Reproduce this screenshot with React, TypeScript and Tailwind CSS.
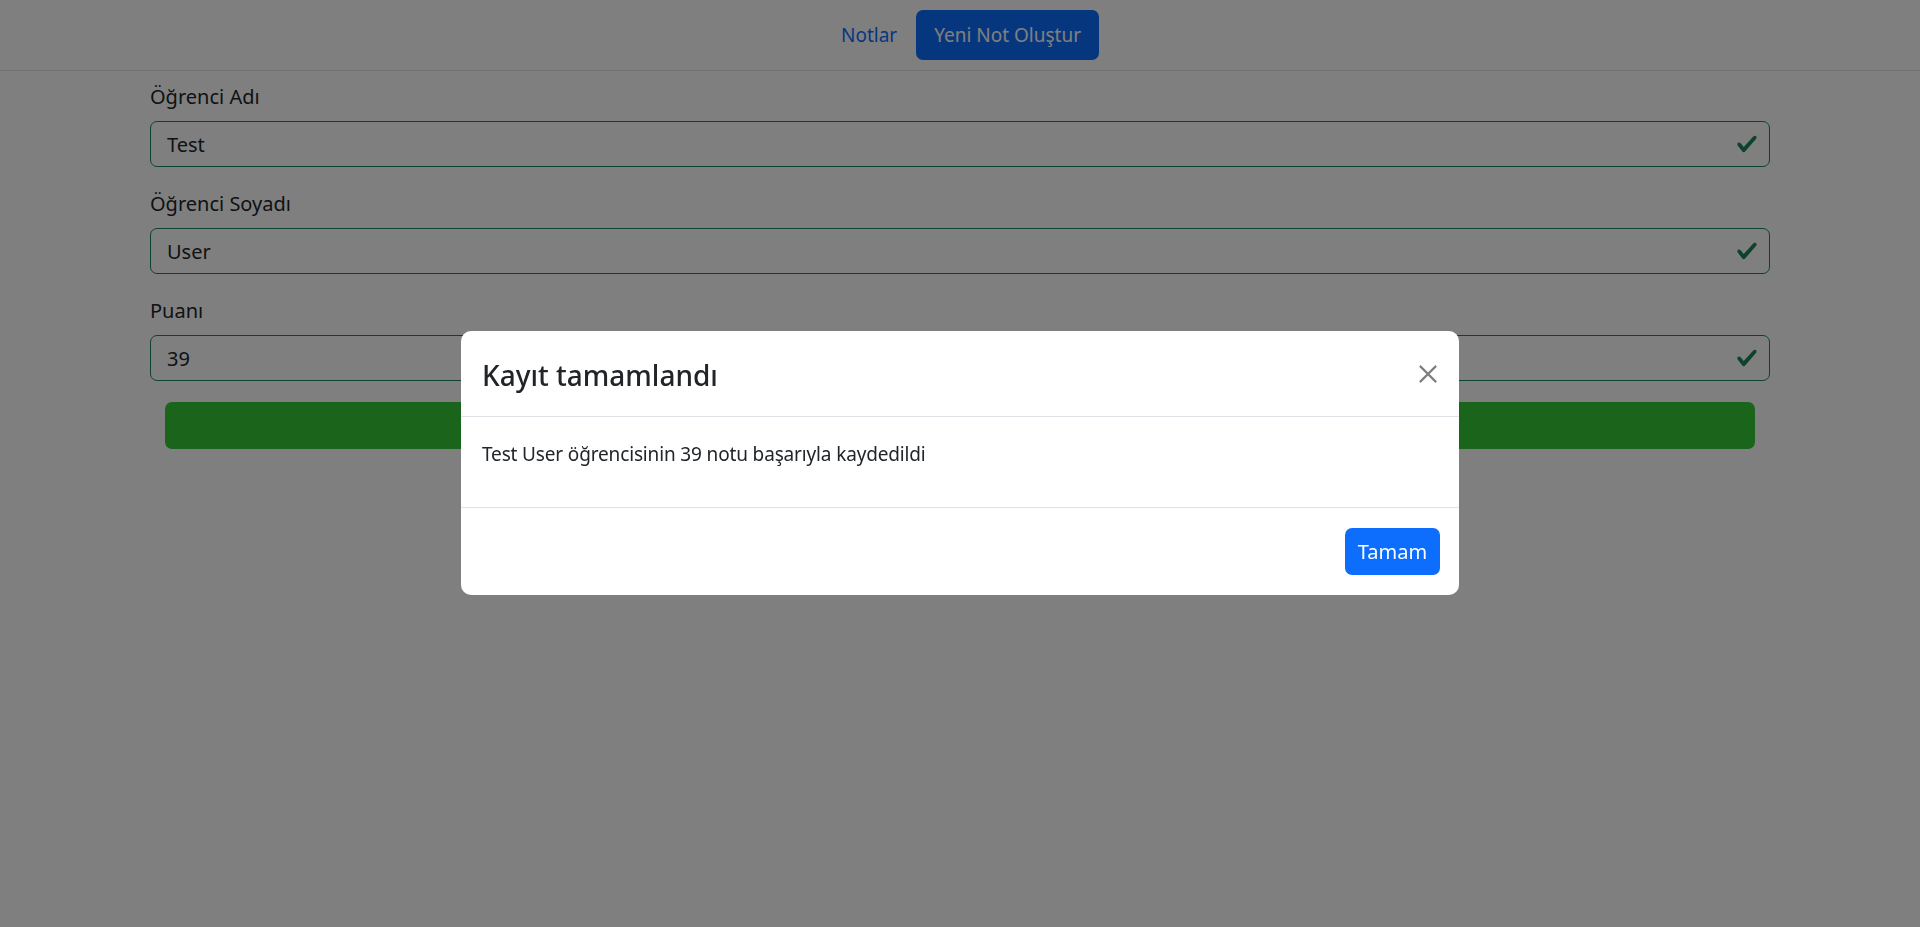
import { useState } from "react";

const fields = [
  { label: "Öğrenci Adı", value: "Test" },
  { label: "Öğrenci Soyadı", value: "User" },
  { label: "Puanı", value: "39" },
];

function ValidIcon() {
  return (
    <svg
      viewBox="0 0 8 8"
      className="absolute right-[12px] top-1/2 -translate-y-1/2 w-[22px] h-[22px]"
    >
      <path
        fill="#198754"
        d="M2.3 6.73.6 4.53c-.4-1.04.46-1.4 1.1-.8l1.1 1.4 3.4-3.8c.6-.63 1.6-.27 1.2.7l-4 4.6c-.43.5-.8.4-1.1.1z"
      />
    </svg>
  );
}

export default function App() {
  const [open, setOpen] = useState(true);

  return (
    <div className="relative min-h-screen bg-white text-[#212529] font-['Noto_Sans','Open_Sans',sans-serif]">
      {/* Navbar */}
      <nav className="h-[71px] border-b border-[#dee2e6] flex items-center justify-center gap-[19px] pl-[20px]">
        <a className="text-[19px] text-[#0d6efd] leading-[30px]">Notlar</a>
        <button className="h-[50px] px-[18px] rounded-[7px] bg-[#0d6efd] text-white text-[19px] leading-[30px]">
          Yeni Not Oluştur
        </button>
      </nav>

      {/* Form */}
      <main className="px-[150px] pt-[11px]">
        <div className="flex flex-col gap-[22px]">
          {fields.map((f) => (
            <div key={f.label}>
              <label className="block text-[20px] leading-[30px] mb-[9px]">
                {f.label}
              </label>
              <div className="relative">
                <input
                  readOnly
                  value={f.value}
                  className="w-full h-[46px] rounded-[7px] border border-[#198754] pl-[16px] pr-[50px] text-[20px] text-[#212529] outline-none"
                />
                <ValidIcon />
              </div>
            </div>
          ))}
        </div>
        <div className="px-[15px] mt-[21px]">
          <button className="w-full h-[47px] rounded-[7px] bg-[#36c836] text-white text-[20px]">
            Kaydet
          </button>
        </div>
      </main>

      {/* Modal */}
      {open && (
        <>
          <div className="fixed inset-0 bg-black/50" />
          <div className="fixed inset-0 flex justify-center items-start pt-[331px]">
            <div className="w-[998px] bg-white rounded-[10px] overflow-hidden">
              {/* Header */}
              <div className="h-[86px] flex items-center justify-between pl-[21px] pr-[20px] border-b border-[#dee2e6]">
                <h5 className="text-[28px] leading-[37px] font-medium pt-[3px]">
                  Kayıt tamamlandı
                </h5>
                <button
                  onClick={() => setOpen(false)}
                  className="w-[20px] h-[20px] mr-[1px] opacity-50"
                >
                  <svg viewBox="0 0 16 16" className="w-[20px] h-[20px]">
                    <path
                      d="M1.5 1.5 14.5 14.5M14.5 1.5 1.5 14.5"
                      stroke="#000"
                      strokeWidth="1.7"
                      fill="none"
                    />
                  </svg>
                </button>
              </div>
              {/* Body */}
              <div className="pt-[22px] pb-[20px] pl-[21px] pr-[20px]">
                <p className="text-[19px] tracking-[-0.15px] leading-[30px] mb-[18px]">
                  Test User öğrencisinin 39 notu başarıyla kaydedildi
                </p>
              </div>
              {/* Footer */}
              <div className="h-[88px] border-t border-[#dee2e6] flex items-center justify-end pr-[19px]">
                <button
                  onClick={() => setOpen(false)}
                  className="h-[47px] w-[95px] rounded-[7px] bg-[#0d6efd] text-white text-[20px]"
                >
                  Tamam
                </button>
              </div>
            </div>
          </div>
        </>
      )}
    </div>
  );
}
